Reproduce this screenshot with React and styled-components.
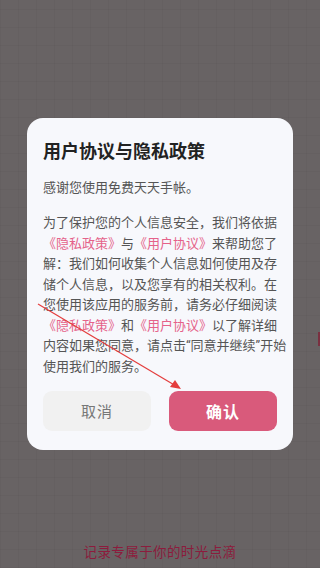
import React from "react";
import styled, { createGlobalStyle } from "styled-components";

const GlobalStyle = createGlobalStyle`
  html, body {
    margin: 0;
    padding: 0;
  }
  body {
    font-family: "Roboto", "Noto Sans CJK SC", sans-serif;
    background-color: #686364;
  }
`;

const Page = styled.div`
  position: relative;
  height: 568px;
  overflow: hidden;
  display: grid;
  grid-template-rows: 1fr auto 1fr;
  justify-items: center;
  background-color: #686364;
  background-image:
    repeating-linear-gradient(90deg, rgba(0, 0, 0, 0.03) 0 1px, transparent 1px 18px),
    repeating-linear-gradient(0deg, rgba(0, 0, 0, 0.03) 0 1px, transparent 1px 18px);
`;

const Card = styled.div`
  grid-row: 2;
  width: 266px;
  box-sizing: border-box;
  padding: 22px 16px 19px;
  background: #f7f8fc;
  border-radius: 16px;
`;

const Title = styled.h1`
  margin: 0 0 14px;
  font-size: 18px;
  line-height: 24px;
  font-weight: 700;
  color: #222;
`;

const Text = styled.div`
  margin: 0 0 ${(p) => p.gap || 0}px;
  font-size: 13px;
  line-height: 20.6px;
  color: #555;
`;

const Line = styled.div`
  white-space: nowrap;
  text-align: justify;
  text-align-last: ${(p) => (p.last ? "left" : "justify")};
`;

const Link = styled.span`
  color: #e5628a;
`;

const Buttons = styled.div`
  display: flex;
  gap: 18px;
  margin-top: 13px;
`;

const Button = styled.button`
  flex: 1;
  height: 40px;
  border: none;
  border-radius: 9px;
  font-family: inherit;
  font-size: ${(p) => (p.primary ? 16 : 15)}px;
  font-weight: ${(p) => (p.primary ? 700 : 400)};
  color: ${(p) => (p.primary ? "#fff" : "#777")};
  background: ${(p) => (p.primary ? "#d95a7b" : "#f1f1f1")};
  letter-spacing: 1px;
`;

const Slogan = styled.div`
  grid-row: 3;
  align-self: end;
  margin-bottom: 7px;
  font-size: 13.5px;
  letter-spacing: 0.4px;
  color: #8c1c3d;
`;

const EdgeMark = styled.span`
  position: absolute;
  right: 0;
  top: 332px;
  width: 2px;
  height: 14px;
  background: #7a3040;
`;

const Arrow = styled.svg`
  position: absolute;
  inset: 0;
  pointer-events: none;
`;

export default function App() {
  return (
    <>
      <GlobalStyle />
      <Page>
        <Card>
          <Title>用户协议与隐私政策</Title>
          <Text gap={14}>感谢您使用免费天天手帐。</Text>
          <Text>
            <Line>为了保护您的个人信息安全，我们将依据</Line>
            <Line>
              <Link>《隐私政策》</Link>与<Link>《用户协议》</Link>来帮助您了
            </Line>
            <Line>解：我们如何收集个人信息如何使用及存</Line>
            <Line>储个人信息，以及您享有的相关权利。在</Line>
            <Line>您使用该应用的服务前，请务必仔细阅读</Line>
            <Line>
              <Link>《隐私政策》</Link>和<Link>《用户协议》</Link>以了解详细
            </Line>
            <Line>内容如果您同意，请点击“同意并继续”开始</Line>
            <Line last>使用我们的服务。</Line>
          </Text>
          <Buttons>
            <Button>取消</Button>
            <Button primary>确认</Button>
          </Buttons>
        </Card>
        <Slogan>记录专属于你的时光点滴</Slogan>
        <EdgeMark />
        <Arrow width="320" height="568" viewBox="0 0 320 568">
          <line x1="38" y1="304" x2="176" y2="386" stroke="#e43d3d" strokeWidth="1.2" />
          <polygon points="181,389 170,387 175,380" fill="#e43d3d" />
        </Arrow>
      </Page>
    </>
  );
}
